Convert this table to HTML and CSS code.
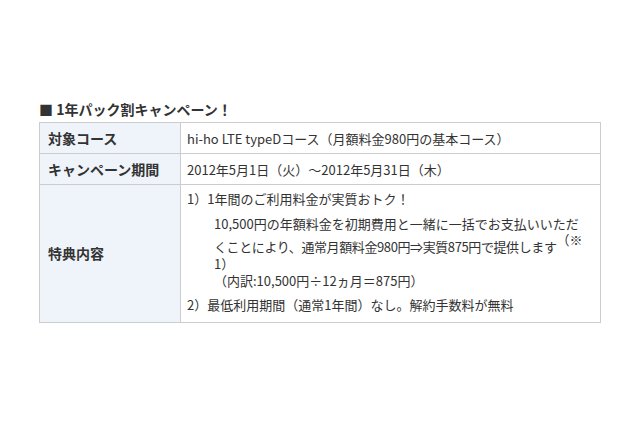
FILE: index.html
```html
<!DOCTYPE html>
<html lang="ja">
<head>
<meta charset="utf-8">
<link rel="stylesheet" href="styles.css">
</head>
<body>
<div class="wrap">
  <h3 class="title">■ 1年パック割キャンペーン！</h3>
  <table class="campaign">
    <tr class="r1">
      <th>対象コース</th>
      <td>hi-ho LTE typeDコース（月額料金980円の基本コース）</td>
    </tr>
    <tr class="r2">
      <th>キャンペーン期間</th>
      <td>2012年5月1日（火）～2012年5月31日（木）</td>
    </tr>
    <tr class="r3">
      <th>特典内容</th>
      <td>
        <p class="item">1）1年間のご利用料金が実質おトク！</p>
        <div class="detail">
          <div class="line">10,500円の年額料金を初期費用と一緒に一括でお支払いいただ</div>
          <div class="line sup-line">くことにより、通常月額料金980円⇒実質875円で提供します<sup class="note">（※</sup></div>
          <div class="line">1）</div>
          <div class="line">（内訳:10,500円÷12ヵ月＝875円）</div>
        </div>
        <p class="item item2">2）最低利用期間（通常1年間）なし。解約手数料が無料</p>
      </td>
    </tr>
  </table>
</div>
</body>
</html>
```
FILE: styles.css
```css
html, body {
  margin: 0;
  padding: 0;
  background: #ffffff;
}
body {
  font-family: "Noto Sans CJK JP", "Liberation Sans", sans-serif;
  color: #333333;
}
.wrap {
  padding: 100px 0 0 39px;
  width: 562px;
}
.title {
  margin: 0 0 4px 0;
  font-size: 14px;
  line-height: 18px;
  font-weight: bold;
  color: #333333;
}
.campaign {
  width: 562px;
  table-layout: fixed;
  border-collapse: collapse;
  font-size: 13px;
  line-height: 17px;
}
.campaign th,
.campaign td {
  border: 1px solid #cccccc;
  vertical-align: middle;
}
.campaign th {
  width: 124px;
  background: #eff4fa;
  text-align: left;
  font-size: 14px;
  font-weight: bold;
  padding: 0 8px;
  color: #333333;
}
.campaign td {
  padding: 0 6px;
  color: #333333;
  white-space: nowrap;
}
.r1 th, .r1 td { height: 30px; }
.r2 th, .r2 td { height: 30px; }
.r3 td {
  padding-top: 5px;
  padding-bottom: 9px;
}
.item {
  margin: 0;
}
.detail {
  margin: 8px 0 7px 27px;
}
.line {
  white-space: nowrap;
}
.sup-line {
  margin-top: 6px;
  letter-spacing: -0.4px;
}
.note {
  font-size: 13px;
  line-height: 0;
  vertical-align: 7px;
  letter-spacing: 0;
}
```
